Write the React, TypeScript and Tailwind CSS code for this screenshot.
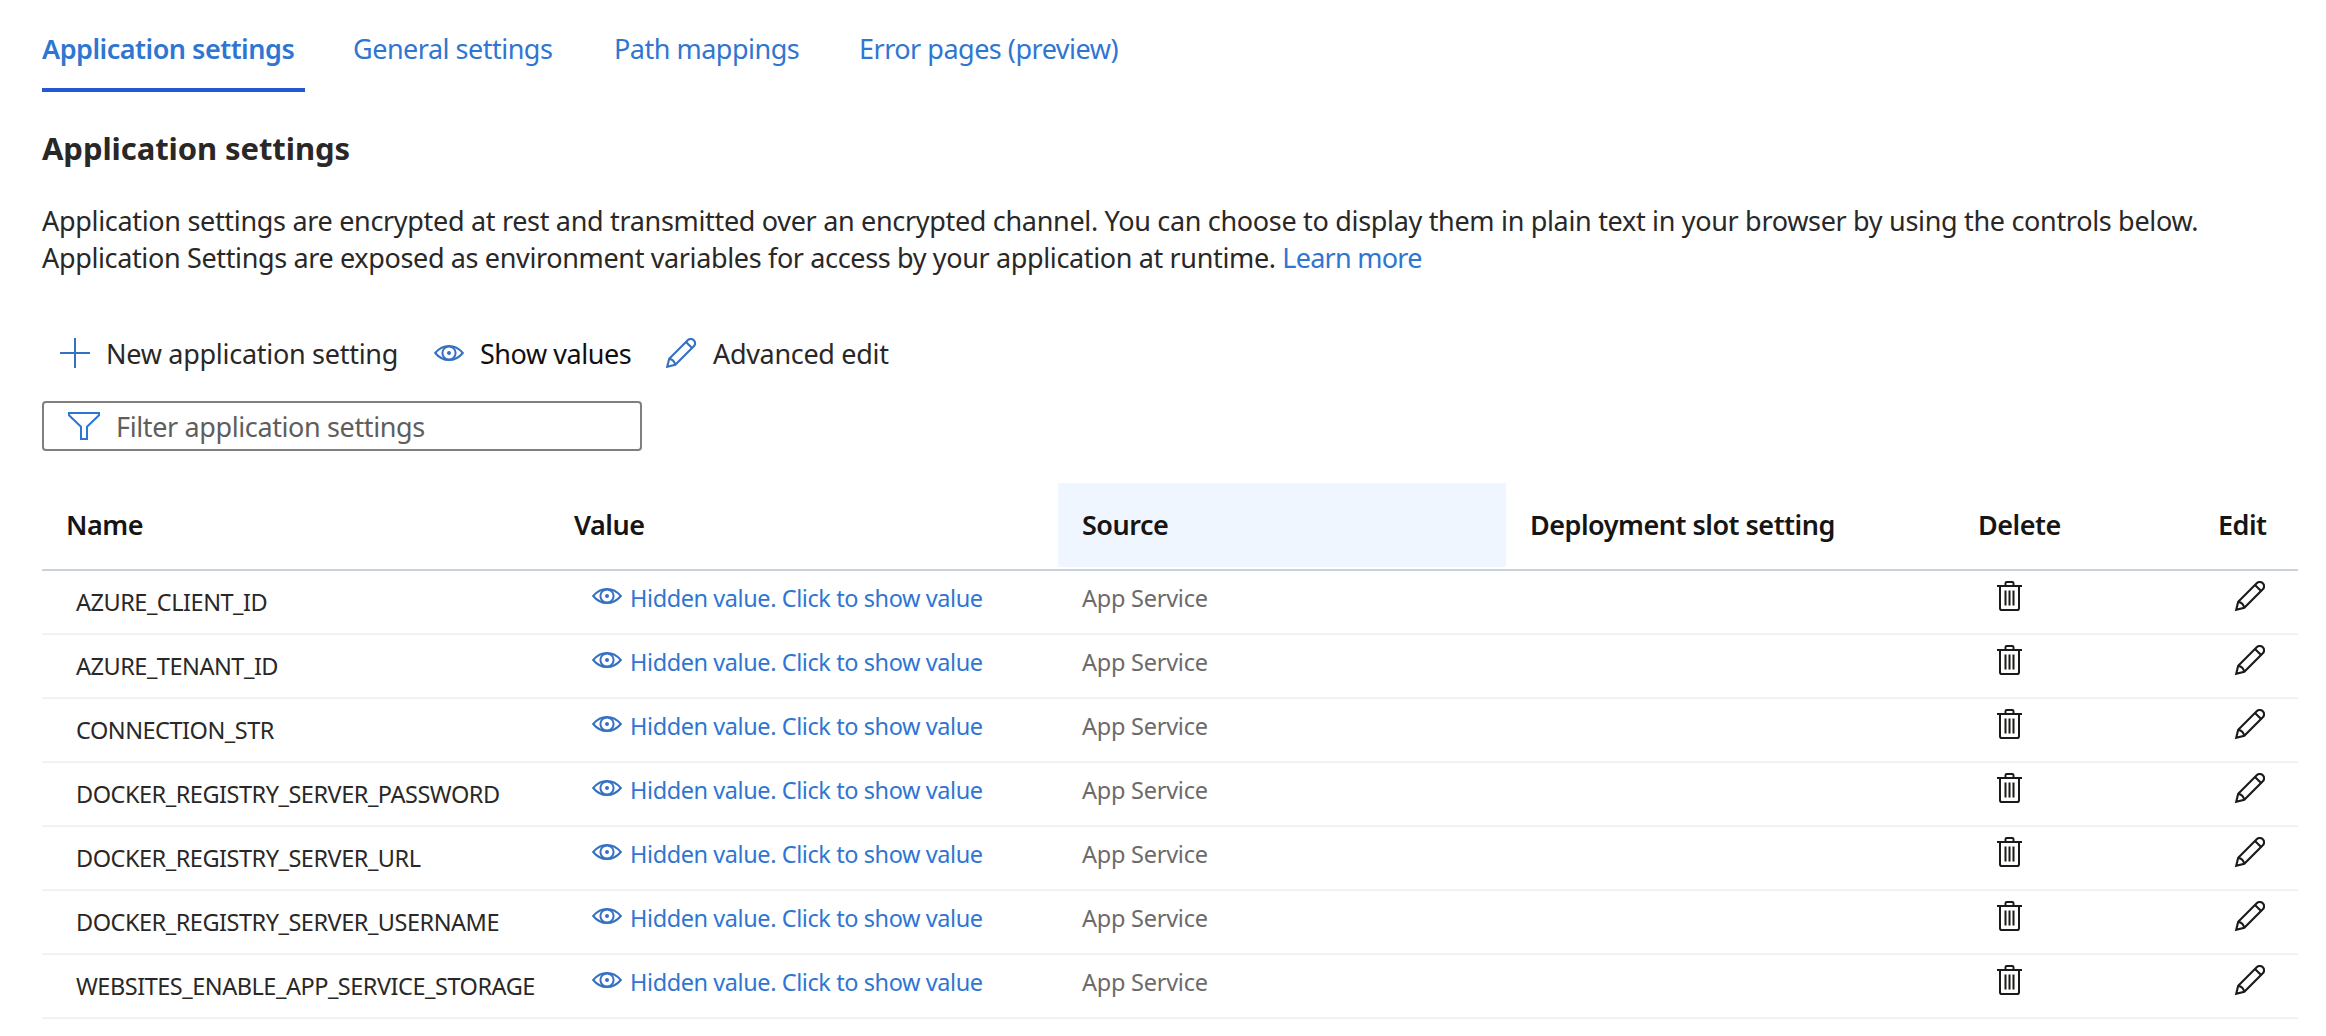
import React from "react";

function PlusIcon() {
  return (
    <svg className="h-[30px] w-[30px] shrink-0" viewBox="0 0 30 30" stroke="#3470c4" strokeWidth="2" fill="none">
      <path d="M15 0V30M0 15H30" />
    </svg>
  );
}

function EyeIcon() {
  return (
    <svg className="h-[16px] w-[30px] shrink-0" viewBox="0 0 30 16" stroke="#3470c4" strokeWidth="2" fill="none">
      <path d="M1.2 8C5 3.4 9.6 1 15 1s10 2.4 13.8 7C25 12.6 20.4 15 15 15S5 12.6 1.2 8Z" />
      <circle cx="15" cy="8" r="6.6" />
      <circle cx="15" cy="8" r="2" fill="#3470c4" stroke="none" />
    </svg>
  );
}

function PencilIcon({ color }: { color: string }) {
  return (
    <svg className="h-[30px] w-[30px] shrink-0" viewBox="0 0 30 30" stroke={color} strokeWidth="2.1" fill="none">
      <path d="M1.2 28.8 3.2 20.7 21.7 2.2a4.3 4.3 0 0 1 6.1 6.1L9.3 26.8Z" />
      <path d="M20 3.9 26.1 10M3.2 20.7q5 1 6.1 6.1" />
    </svg>
  );
}

function TrashIcon() {
  return (
    <svg className="h-[30px] w-[25px] shrink-0" viewBox="0 0 25 30" stroke="#1b1a19" strokeWidth="2" fill="none">
      <path d="M0 5H25M8.5 5V2.2Q8.5 1 9.700 1h5.6q1.2 0 1.2 1.2V5M3 5V27.2Q3 29 4.8 29H20.2Q22 29 22 27.2V5M8.5 9.5V24.5M12.5 9.5V24.5M16.5 9.5V24.5" />
    </svg>
  );
}

function FilterIcon() {
  return (
    <svg className="h-[28px] w-[32px] shrink-0" viewBox="0 0 32 28" stroke="#2f76d2" strokeWidth="2" fill="none">
      <path d="M1 1H31V3.3L19 14.8V27H13V14.8L1 3.3Z" />
    </svg>
  );
}

const settings = [
  "AZURE_CLIENT_ID",
  "AZURE_TENANT_ID",
  "CONNECTION_STR",
  "DOCKER_REGISTRY_SERVER_PASSWORD",
  "DOCKER_REGISTRY_SERVER_URL",
  "DOCKER_REGISTRY_SERVER_USERNAME",
  "WEBSITES_ENABLE_APP_SERVICE_STORAGE",
];

const columns = "grid grid-cols-[508px_508px_448px_448px_240px_104px]";
const headers = ["Name", "Value", "Source", "Deployment slot setting", "Delete", "Edit"];

export default function App() {
  return (
    <div className="min-h-[1036px] w-[2326px] bg-white pl-[42px] font-['Noto_Sans','Open_Sans',sans-serif] text-[27px] leading-9 whitespace-nowrap text-[#292827]">
      <nav className="flex h-[92px] gap-12 pt-[31px] tracking-[-0.5px] text-[#2f76d2]">
        <div className="w-[263px] border-b-4 border-[#2459d3] font-semibold">Application settings</div>
        <div className="w-[212px]">General settings</div>
        <div className="w-[198px] pl-px">Path mappings</div>
        <div>Error pages (preview)</div>
      </nav>

      <h1 className="mt-9 text-[31px] leading-10 font-bold tracking-[-0.08px]">Application settings</h1>

      <p className="mt-[34px] leading-[37px]">
        <span className="tracking-[-0.32px]">
          Application settings are encrypted at rest and transmitted over an encrypted channel. You can choose to display them in plain text in your browser by using the controls below.
        </span>
        <br />
        <span className="tracking-[-0.36px]">
          Application Settings are exposed as environment variables for access by your application at runtime.{" "}
        </span>
        <a className="tracking-[-0.75px] text-[#2f76d2]">Learn more</a>
      </p>

      <div className="mt-[59px] flex h-9 items-center">
        <button className="flex w-[375px] items-center gap-4 pl-[18px]">
          <PlusIcon />
          <span className="pt-px tracking-[-0.28px]">New application setting</span>
        </button>
        <button className="flex w-[231px] items-center gap-4 pl-[17px] text-[#11100f]">
          <EyeIcon />
          <span className="pt-px tracking-[-0.45px]">Show values</span>
        </button>
        <button className="flex items-center gap-[17px] pl-[18px]">
          <PencilIcon color="#3470c4" />
          <span className="pt-px tracking-[-0.32px]">Advanced edit</span>
        </button>
      </div>

      <div className="mt-[30px] flex h-[50px] w-[600px] items-center gap-4 rounded-[4px] border-2 border-[#807f7e] pl-6 text-[#605e5c]">
        <FilterIcon />
        <span className="pt-px tracking-[-0.38px]">Filter application settings</span>
      </div>

      <div className="mt-8 w-[2256px]">
        <div className={`${columns} h-[88px] border-b-2 border-[#cbd2de] font-semibold tracking-[-0.5px] text-[#161514]`}>
          {headers.map((h) => (
            <div key={h} className={`h-[84px] pt-6 pl-6 ${h === "Source" ? "bg-[#eff6ff]" : ""}`}>
              {h}
            </div>
          ))}
        </div>
        {settings.map((name) => (
          <div key={name} className={`${columns} h-16 border-b-2 border-[#f3f2f1] text-[23.5px] leading-8 tracking-[-0.42px]`}>
            <div className="pt-[15px] pl-[34px] tracking-[-0.48px]">{name}</div>
            <div className="flex items-start gap-2 pl-[42px] text-[#2f76d2]">
              <div className="pt-[17px]">
                <EyeIcon />
              </div>
              <span className="pt-[11px]">Hidden value. Click to show value</span>
            </div>
            <div className="pt-[11px] pl-6 tracking-[-0.25px] text-[#6d6b69]">App Service</div>
            <div />
            <div className="pt-2.5 pl-[43px]">
              <TrashIcon />
            </div>
            <div className="pt-2.5 pl-[41px]">
              <PencilIcon color="#1b1a19" />
            </div>
          </div>
        ))}
      </div>
    </div>
  );
}
